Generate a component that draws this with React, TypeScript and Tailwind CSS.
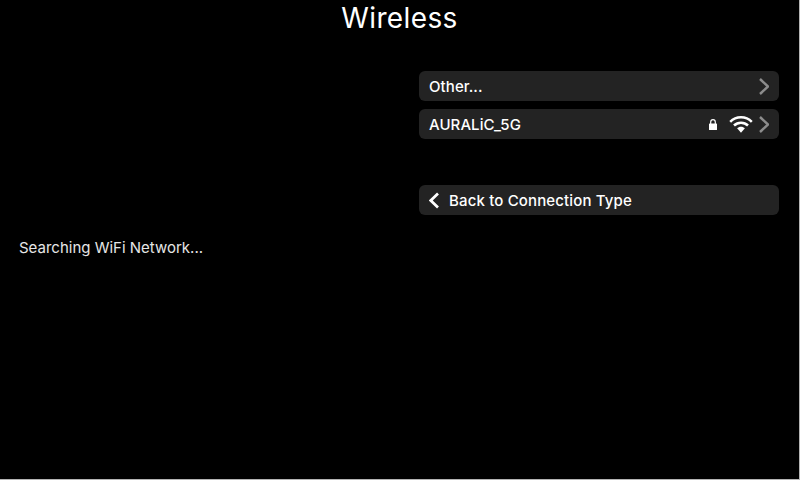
function LockIcon() {
  return (
    <svg width="8" height="11" viewBox="0 0 8 11" className="block">
      <path d="M1.700 5V2.900a2.300 2.300 0 0 1 4.600 0V5" fill="none" stroke="white" strokeWidth="1.200" />
      <rect x="0" y="4.500" width="8" height="6.500" rx="0.600" fill="white" />
    </svg>
  );
}

function WifiIcon() {
  return (
    <svg width="24" height="18" viewBox="0 0 24 18" className="block">
      <path d="M1.200 6.800a15.200 15.200 0 0 1 21.600 0" fill="none" stroke="white" strokeWidth="2.500" />
      <path d="M5 10.500a10 10 0 0 1 14 0" fill="none" stroke="white" strokeWidth="2.500" />
      <path d="M12 11.800c1.500 0 2.900.6 3.900 1.500L12 17.800 8.100 13.300c1-.9 2.400-1.500 3.900-1.500z" fill="white" />
    </svg>
  );
}

function Chevron({ left = false }: { left?: boolean }) {
  return (
    <svg width="10" height="17" viewBox="0 0 10 17" className="block">
      <path
        d={left ? "M9 1.500 1.800 8.500l7.200 7" : "M1 1 9 8.500 1 16"}
        fill="none"
        stroke={left ? "white" : "#8c8c8c"}
        strokeWidth={left ? 2.700 : 2.400}
      />
    </svg>
  );
}

function Row({ label, children }: { label: string; children?: React.ReactNode }) {
  return (
    <div className="flex h-[30px] items-center rounded-md bg-[#232323] pl-[10px] pr-[10px]">
      <span className="flex-1 pt-[2px] text-[15px] font-[450] tracking-[0.08px] text-white">{label}</span>
      {children}
      <Chevron />
    </div>
  );
}

export default function App() {
  return (
    <div className="flex h-[480px] w-[800px] flex-col border-b border-r border-[#b4b4b4] bg-black font-['Inter',sans-serif] text-white">
      <h1 className="h-[71px] pt-[1px] text-center text-[28px] leading-[34px] font-normal tracking-[0.38px]">
        Wireless
      </h1>
      <div className="flex flex-1">
        <div className="w-[419px] pl-[19px] pt-[167px]">
          <p className="text-[15px] leading-[20px] text-[#e6e6e6]">Searching WiFi Network...</p>
        </div>
        <div className="flex w-[360px] flex-col">
          <Row label="Other..." />
          <div className="mt-2">
            <Row label="AURALiC_5G">
              <div className="mr-[12px] pt-[1px]">
                <LockIcon />
              </div>
              <div className="mr-[6px]">
                <WifiIcon />
              </div>
            </Row>
          </div>
          <div className="mt-[46px] flex h-[30px] items-center rounded-md bg-[#232323] pl-[10px]">
            <Chevron left />
            <span className="ml-[10px] pt-[2px] text-[15px] font-[450] tracking-[0.15px] text-white">
              Back to Connection Type
            </span>
          </div>
        </div>
      </div>
    </div>
  );
}
